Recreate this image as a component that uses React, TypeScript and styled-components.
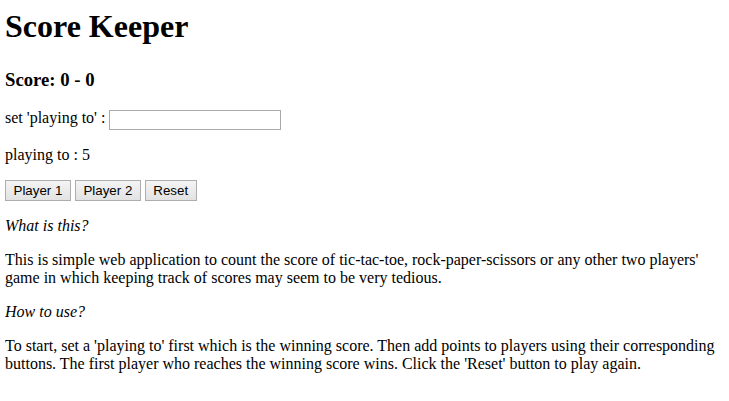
import React from 'react'
import styled, { createGlobalStyle } from 'styled-components'

const GlobalStyle = createGlobalStyle`
  body {
    margin: 8px 5px;
    font-family: 'Liberation Serif', 'Times New Roman', serif;
    font-size: 16px;
    color: #000;
    background: #fff;
  }
`

const Page = styled.div`
  display: block;
`

const Title = styled.h1`
  font-size: 2em;
  font-weight: bold;
  margin: 0 0 23.5px;
`

const ScoreLine = styled.h3`
  font-size: 1.17em;
  font-weight: bold;
  margin: 1em 0;
`

const Para = styled.p<{ $italic?: boolean }>`
  margin: 1em 0;
  font-style: ${(p) => (p.$italic ? 'italic' : 'normal')};
`

const TargetInput = styled.input`
  box-sizing: border-box;
  font-family: 'Liberation Sans', Arial, sans-serif;
  font-size: 13.33px;
  width: 172px;
  height: 20px;
  padding: 1px 2px;
  margin: 0;
  border: 1px solid #a9a9a9;
  vertical-align: middle;
`

const ButtonRow = styled.div`
  display: flex;
  gap: 4px;
`

const Button = styled.button`
  box-sizing: border-box;
  height: 21px;
  font-family: 'Liberation Sans', Arial, sans-serif;
  font-size: 13.33px;
  line-height: 15px;
  color: #000;
  padding: 2px 7.5px;
  margin: 0;
  border: 1px solid #adadad;
  border-radius: 0;
  background: linear-gradient(#f4f4f4, #e2e2e2);
`

export default function App() {
  const [target, setTarget] = React.useState(5)
  const [p1, setP1] = React.useState(0)
  const [p2, setP2] = React.useState(0)

  return (
    <Page>
      <GlobalStyle />
      <Title>Score Keeper</Title>
      <ScoreLine>
        Score: {p1} - {p2}
      </ScoreLine>
      <Para>
        set 'playing to' :{' '}
        <TargetInput
          type="number"
          onChange={(e) => setTarget(Number(e.target.value) || 5)}
        />
      </Para>
      <Para>playing to : {target}</Para>
      <ButtonRow>
        <Button onClick={() => setP1(p1 + 1)}>Player 1</Button>
        <Button onClick={() => setP2(p2 + 1)}>Player 2</Button>
        <Button
          onClick={() => {
            setP1(0)
            setP2(0)
          }}
        >
          Reset
        </Button>
      </ButtonRow>
      <Para $italic>What is this?</Para>
      <Para>
        This is simple web application to count the score of tic-tac-toe,
        rock-paper-scissors or any other two players' game in which keeping
        track of scores may seem to be very tedious.
      </Para>
      <Para $italic>How to use?</Para>
      <Para>
        To start, set a 'playing to' first which is the winning score. Then add
        points to players using their corresponding buttons. The first player
        who reaches the winning score wins. Click the 'Reset' button to play
        again.
      </Para>
    </Page>
  )
}
